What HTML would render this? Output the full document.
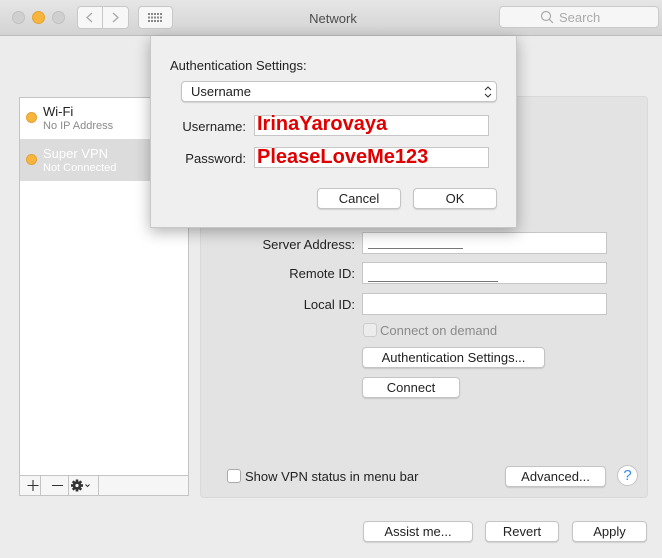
<!DOCTYPE html>
<html><head><style>
*{box-sizing:border-box;margin:0;padding:0}
body{width:662px;height:558px;background:#ececec;font-family:"Liberation Sans",sans-serif;font-size:13px;color:#222;position:relative;overflow:hidden}
.abs{position:absolute}
.btn{position:absolute;background:#fff;border:1px solid #c4c4c4;border-radius:4px;box-shadow:0 1px 1px rgba(0,0,0,.12);text-align:center;font-size:13px;line-height:19px;color:#222}
.field{position:absolute;background:#fff;border:1px solid #c6c6c6}
.lbl{position:absolute;text-align:right;font-size:13px}
.red{position:absolute;color:#e00000;font-weight:bold;font-size:20px;line-height:20px;text-shadow:0 0 2px #fff,0 0 2px #fff}
</style></head><body>
<div class="abs" style="left:0;top:0;width:662px;height:36px;background:linear-gradient(#e6e6e6,#d3d3d3);border-bottom:1px solid #bdbdbd"></div>
<div class="abs" style="left:12px;top:11px;width:13px;height:13px;border-radius:50%;background:#d0d0d0;border:1px solid #c0c0c0"></div>
<div class="abs" style="left:32px;top:11px;width:13px;height:13px;border-radius:50%;background:#f8b53c;border:1px solid #e3a235"></div>
<div class="abs" style="left:52px;top:11px;width:13px;height:13px;border-radius:50%;background:#d0d0d0;border:1px solid #c0c0c0"></div>
<div class="abs" style="left:77px;top:6px;width:52px;height:23px;background:#f7f7f7;border:1px solid #c8c8c8;border-radius:4px"></div>
<div class="abs" style="left:102px;top:6px;width:1px;height:23px;background:#c8c8c8"></div>
<svg class="abs" style="left:77px;top:6px" width="52" height="23"><path d="M15 7 L10 11.5 L15 16 M36 7 L41 11.5 L36 16" stroke="#a8a8a8" stroke-width="1.3" fill="none"/></svg>
<div class="abs" style="left:138px;top:6px;width:35px;height:23px;background:#f7f7f7;border:1px solid #c8c8c8;border-radius:4px"></div>
<svg class="abs" style="left:138px;top:6px" width="35" height="23"><g fill="#888"><rect x="10" y="7" width="2" height="2"/><rect x="13" y="7" width="2" height="2"/><rect x="16" y="7" width="2" height="2"/><rect x="19" y="7" width="2" height="2"/><rect x="22" y="7" width="2" height="2"/><rect x="10" y="10.5" width="2" height="2"/><rect x="13" y="10.5" width="2" height="2"/><rect x="16" y="10.5" width="2" height="2"/><rect x="19" y="10.5" width="2" height="2"/><rect x="22" y="10.5" width="2" height="2"/><rect x="10" y="14" width="2" height="2"/><rect x="13" y="14" width="2" height="2"/><rect x="16" y="14" width="2" height="2"/><rect x="19" y="14" width="2" height="2"/><rect x="22" y="14" width="2" height="2"/></g></svg>
<div class="abs" style="left:300px;top:11px;width:66px;font-size:13px;color:#4d4d4d;text-align:center">Network</div>
<div class="abs" style="left:499px;top:6px;width:160px;height:22px;background:#f6f6f6;border:1px solid #cacaca;border-radius:4px"></div>
<svg class="abs" style="left:540px;top:10px" width="14" height="14"><circle cx="6" cy="6" r="4.5" stroke="#aaa" stroke-width="1.2" fill="none"/><path d="M9.3 9.3 L13 13" stroke="#aaa" stroke-width="1.2"/></svg>
<div class="abs" style="left:559px;top:10px;color:#aaa;font-size:13px">Search</div>

<div class="abs" style="left:19px;top:97px;width:170px;height:399px;background:#fff;border:1px solid #c4c4c4"></div>
<div class="abs" style="left:20px;top:139px;width:168px;height:42px;background:#dcdcdc"></div>
<div class="abs" style="left:26px;top:112px;width:11px;height:11px;border-radius:50%;background:#f8b53c;border:1px solid #e3a235"></div>
<div class="abs" style="left:43px;top:104px;font-size:13px">Wi-Fi</div>
<div class="abs" style="left:43px;top:120px;font-size:11px;color:#8a8a8a">No IP Address</div>
<div class="abs" style="left:26px;top:154px;width:11px;height:11px;border-radius:50%;background:#f8b53c;border:1px solid #e3a235"></div>
<div class="abs" style="left:43px;top:146px;font-size:13px;color:#fff">Super VPN</div>
<div class="abs" style="left:43px;top:162px;font-size:11px;color:#fff">Not Connected</div>
<div class="abs" style="left:20px;top:475px;width:168px;height:20px;background:#f6f6f6;border-top:1px solid #c4c4c4"></div>
<div class="abs" style="left:40px;top:476px;width:1px;height:19px;background:#c4c4c4"></div>
<div class="abs" style="left:68px;top:476px;width:1px;height:19px;background:#c4c4c4"></div>
<div class="abs" style="left:98px;top:476px;width:1px;height:19px;background:#c4c4c4"></div>
<svg class="abs" style="left:20px;top:476px" width="80" height="19"><path d="M13 4v11M7.5 9.5h11M32 9.5h11" stroke="#333" stroke-width="1.1"/><g transform="translate(57 9.5)" fill="#333"><rect x="-1.3" y="-6" width="2.6" height="12"/><rect x="-1.3" y="-6" width="2.6" height="12" transform="rotate(45)"/><rect x="-1.3" y="-6" width="2.6" height="12" transform="rotate(90)"/><rect x="-1.3" y="-6" width="2.6" height="12" transform="rotate(135)"/><circle r="4.3"/><circle r="1.6" fill="#f6f6f6"/></g><path d="M65.5 8.5l2 2 2-2" stroke="#333" fill="none"/></svg>

<div class="abs" style="left:200px;top:96px;width:448px;height:402px;background:#e3e3e3;border:1px solid #d9d9d9;border-radius:4px"></div>
<div class="lbl" style="left:210px;top:237px;width:145px">Server Address:</div>
<div class="field" style="left:362px;top:232px;width:245px;height:22px"></div>
<div class="abs" style="left:368px;top:248px;width:95px;height:1px;background:#777"></div>
<div class="lbl" style="left:210px;top:266px;width:145px">Remote ID:</div>
<div class="field" style="left:362px;top:262px;width:245px;height:22px"></div>
<div class="abs" style="left:368px;top:281px;width:130px;height:1px;background:#777"></div>
<div class="lbl" style="left:210px;top:297px;width:145px">Local ID:</div>
<div class="field" style="left:362px;top:293px;width:245px;height:22px"></div>
<div class="abs" style="left:363px;top:323px;width:14px;height:14px;border:1px solid #ccc;border-radius:3px;background:#ececec"></div>
<div class="abs" style="left:380px;top:323px;color:#8a8a8a">Connect on demand</div>
<div class="btn" style="left:362px;top:347px;width:183px;height:21px">Authentication Settings...</div>
<div class="btn" style="left:362px;top:377px;width:98px;height:21px">Connect</div>
<div class="abs" style="left:227px;top:469px;width:14px;height:14px;border:1px solid #aaa;border-radius:3px;background:#fff"></div>
<div class="abs" style="left:245px;top:469px">Show VPN status in menu bar</div>
<div class="btn" style="left:505px;top:466px;width:101px;height:21px">Advanced...</div>
<div class="abs" style="left:617px;top:465px;width:21px;height:21px;border-radius:50%;background:#fff;border:1px solid #c4c4c4;color:#2f8cf0;text-align:center;line-height:19px;font-size:15px">?</div>

<div class="btn" style="left:363px;top:521px;width:110px;height:21px">Assist me...</div>
<div class="btn" style="left:485px;top:521px;width:74px;height:21px">Revert</div>
<div class="btn" style="left:572px;top:521px;width:75px;height:21px">Apply</div>

<div class="abs" style="left:150px;top:36px;width:367px;height:192px;background:#efefef;border:1px solid #c8c8c8;border-top:none;box-shadow:0 4px 14px rgba(0,0,0,.3)"></div>
<div class="abs" style="left:170px;top:58px">Authentication Settings:</div>
<div class="btn" style="left:181px;top:81px;width:316px;height:21px;text-align:left;padding-left:9px">Username</div>
<svg class="abs" style="left:483px;top:84px" width="10" height="16"><path d="M2 6l3-3 3 3M2 10l3 3 3-3" stroke="#333" fill="none" stroke-width="1.1"/></svg>
<div class="lbl" style="left:160px;top:119px;width:86px">Username:</div>
<div class="field" style="left:254px;top:115px;width:235px;height:21px"></div>
<div class="red" style="left:257px;top:114px">IrinaYarovaya</div>
<div class="lbl" style="left:160px;top:151px;width:86px">Password:</div>
<div class="field" style="left:254px;top:147px;width:235px;height:21px"></div>
<div class="red" style="left:257px;top:147px">PleaseLoveMe123</div>
<div class="btn" style="left:317px;top:188px;width:84px;height:21px">Cancel</div>
<div class="btn" style="left:413px;top:188px;width:84px;height:21px">OK</div>
</body></html>
